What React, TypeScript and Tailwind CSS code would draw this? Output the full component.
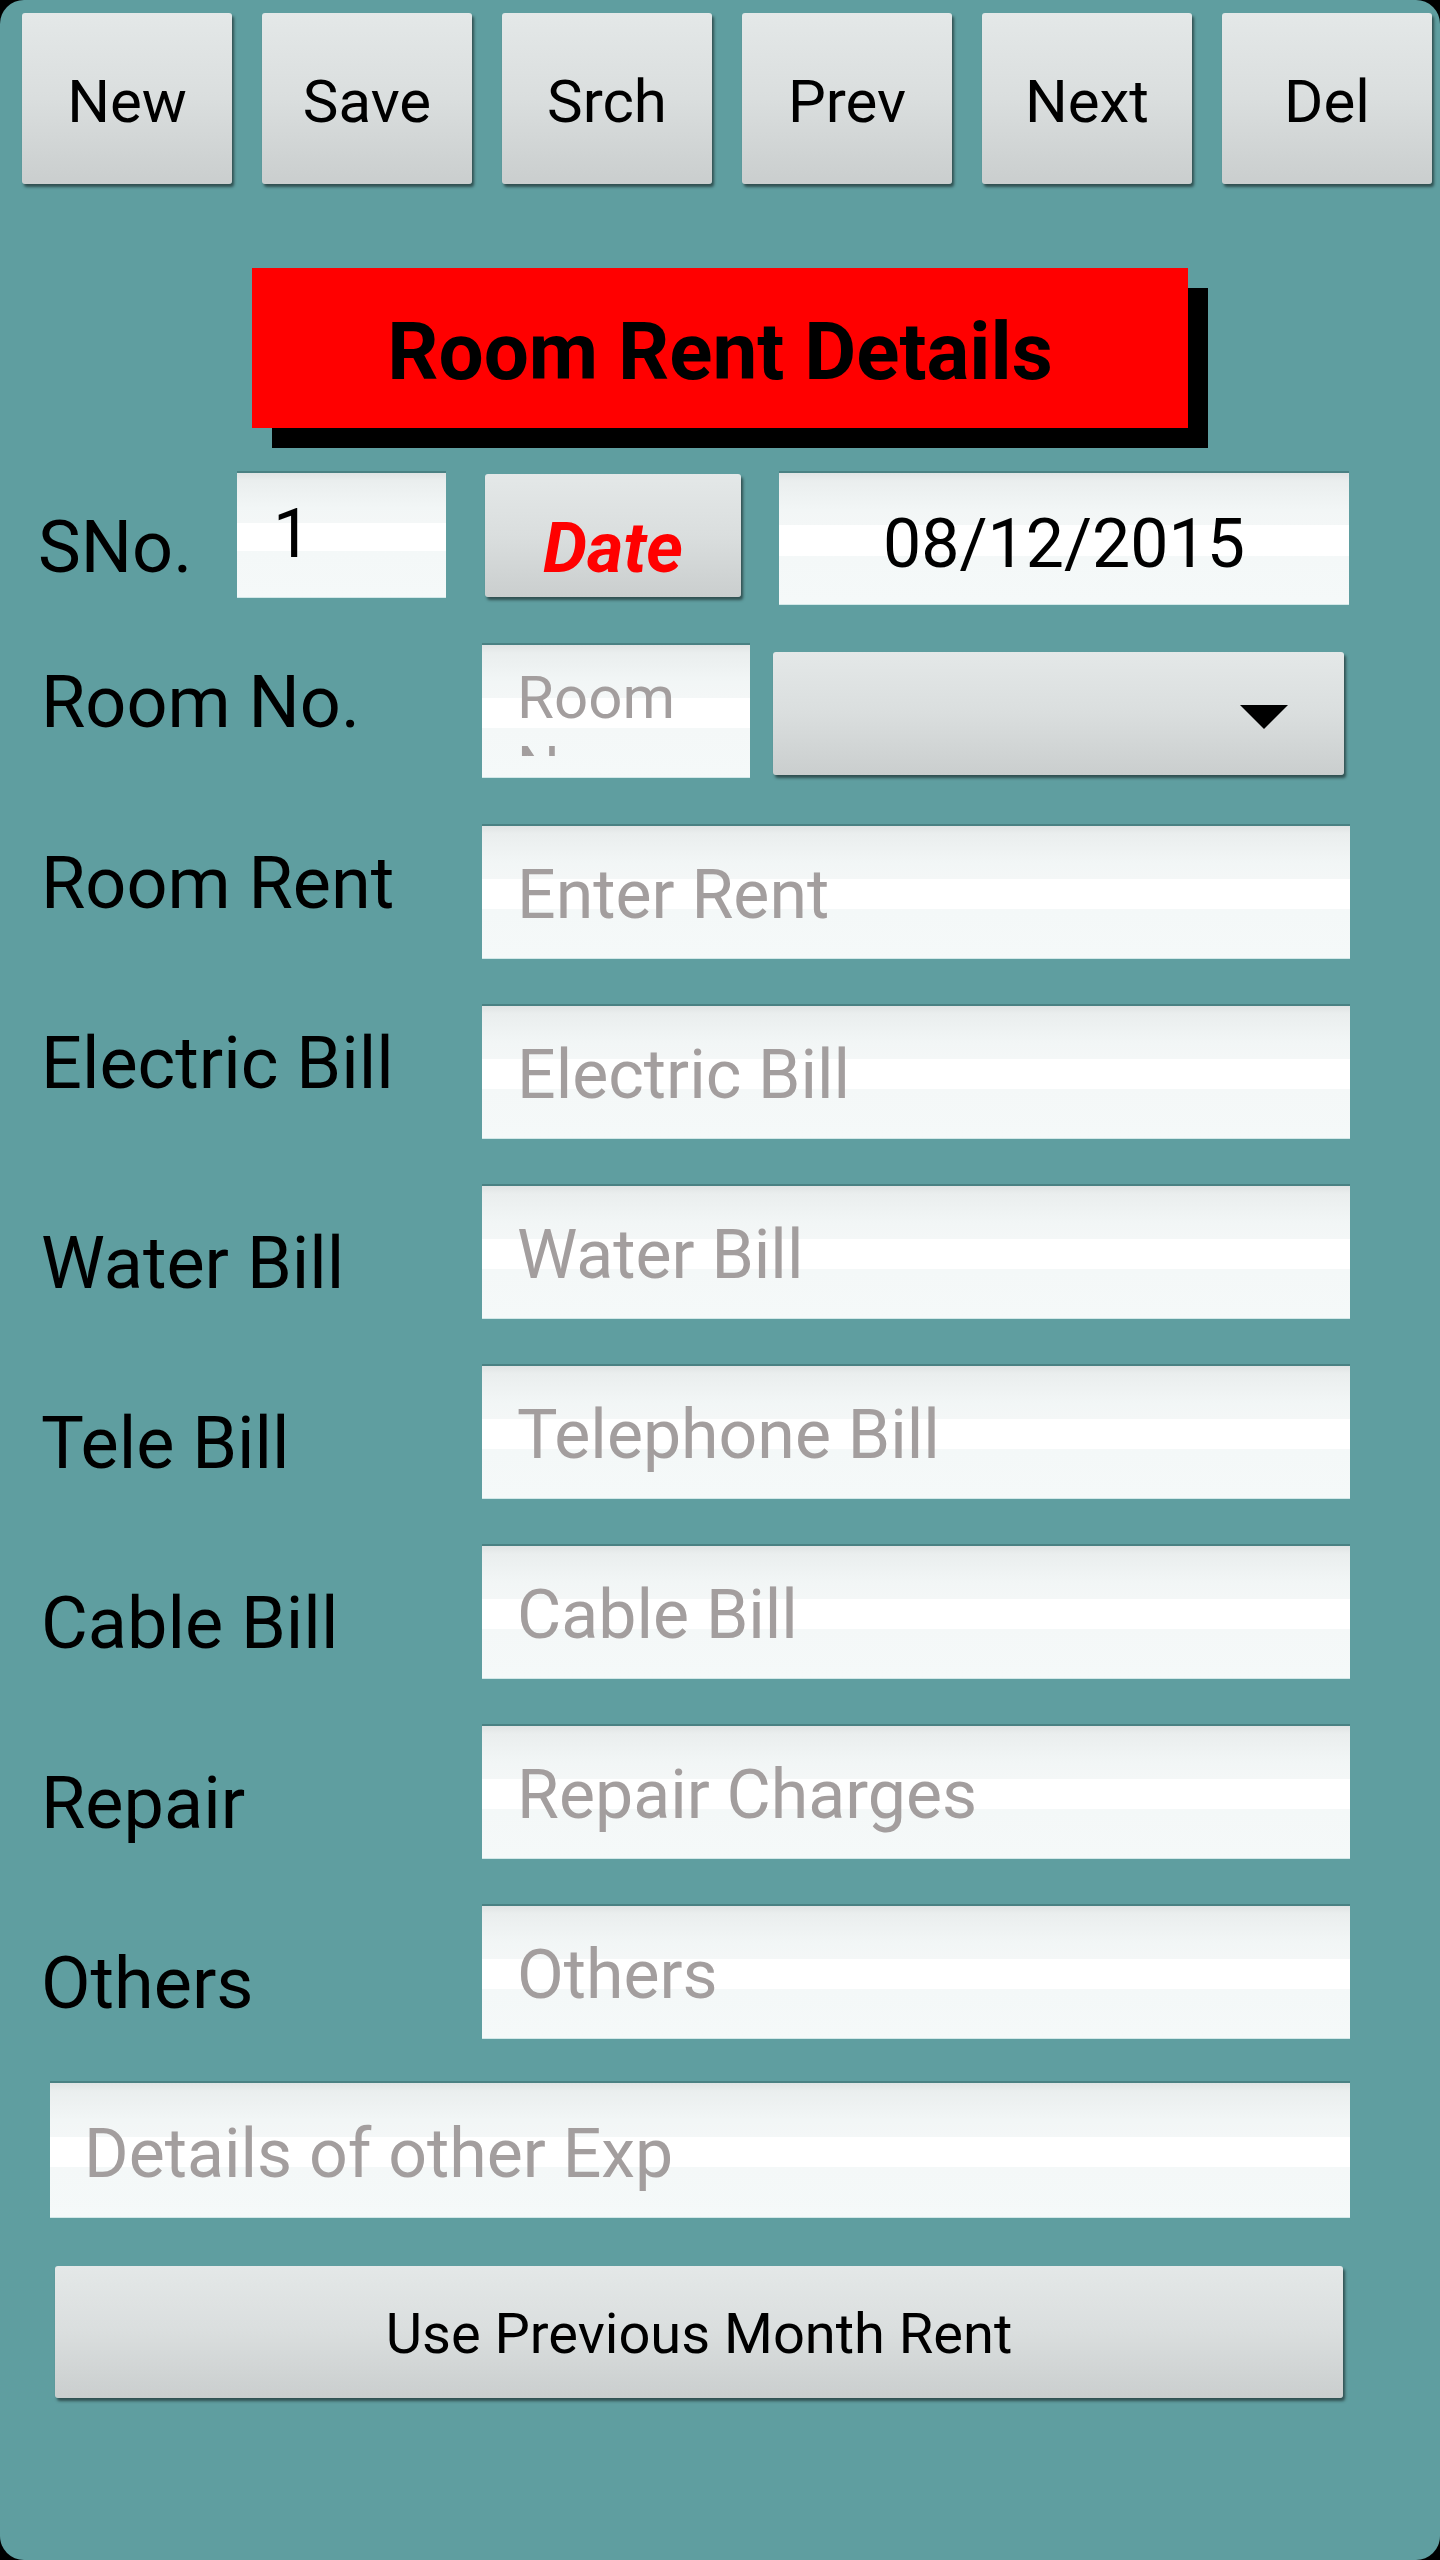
import React from "react";

const BTN =
  "rounded-[3px] bg-[linear-gradient(to_bottom,#e4e8e8_0%,#dadede_50%,#cacece_100%)] shadow-[2px_3px_3px_rgba(0,0,0,0.5)] text-black";

const FIELD =
  "bg-[linear-gradient(to_bottom,#e0e4e4_0%,#eaeeee_6%,#f2f6f6_28%,#f4f7f7_40%,#ffffff_40%,#ffffff_63%,#f4f8f8_63%,#f5f9f9_100%)] shadow-[0_-2px_0_#4a8183,0_1px_0_#d2e8e8]";

const PH = "text-[#a39e9e] text-[68px] leading-[80px] whitespace-nowrap";

type Row = { label: string; ph: string; low: boolean };

const rows: Row[] = [
  { label: "Room Rent", ph: "Enter Rent", low: false },
  { label: "Electric Bill", ph: "Electric Bill", low: false },
  { label: "Water Bill", ph: "Water Bill", low: true },
  { label: "Tele Bill", ph: "Telephone Bill", low: true },
  { label: "Cable Bill", ph: "Cable Bill", low: true },
  { label: "Repair", ph: "Repair Charges", low: true },
  { label: "Others", ph: "Others", low: true },
];

export default function App() {
  return (
    <div className="w-[1440px] h-[2560px] bg-black [font-family:Roboto,sans-serif]">
      <div className="h-full rounded-[24px] bg-[#5f9ea0] flex flex-col">
        {/* Top toolbar */}
        <div className="flex gap-[30px] pl-[22px] pt-[13px]">
          {["New", "Save", "Srch", "Prev", "Next", "Del"].map((t) => (
            <button
              key={t}
              className={
                BTN +
                " w-[210px] h-[171px] text-[60px] leading-none pt-[6px] flex items-center justify-center"
              }
            >
              {t}
            </button>
          ))}
        </div>

        {/* Title */}
        <div className="mt-[84px] ml-[252px] w-[936px] h-[160px] bg-[#ff0000] shadow-[20px_20px_0_#000] flex items-center justify-center pt-[8px] text-[80px] font-bold leading-none text-black">
          Room Rent Details
        </div>

        {/* SNo row */}
        <div className="mt-[45px] flex items-start pl-[38px] h-[131px]">
          <div className="w-[199px] mt-[35px] text-[72px] leading-[80px] text-black">
            SNo.
          </div>
          <div className={FIELD + " w-[209px] h-[124px] pt-[21px] pl-[36px] text-[68px] leading-[80px] text-black"}>
            1
          </div>
          <button
            className={
              BTN +
              " ml-[39px] mt-[1px] w-[256px] h-[123px] pt-[34px] flex justify-center items-start"
            }
          >
            <span className="text-[70px] leading-[80px] font-bold italic text-[#ff0000]">
              Date
            </span>
          </button>
          <div className={FIELD + " ml-[38px] w-[570px] h-[131px] pt-[31px] text-center text-[68px] leading-[80px] text-black"}>
            08/12/2015
          </div>
        </div>

        {/* Room No row */}
        <div className="mt-[41px] flex items-start pl-[41px]">
          <div className="w-[441px] mt-[18px] text-[72px] leading-[80px] text-black whitespace-nowrap">
            Room No.
          </div>
          <div className={FIELD + " w-[268px] h-[132px] pt-[18px] pb-[21px] pl-[35px] pr-[20px]"}>
            <div className="h-full overflow-hidden text-[60px] leading-[70px] text-[#a39e9e]">
              Room No.
            </div>
          </div>
          <div
            className={
              BTN +
              " ml-[23px] mt-[7px] w-[571px] h-[123px] flex items-center justify-end pr-[56px] pt-[7px]"
            }
          >
            <svg width="48" height="24" viewBox="0 0 48 24">
              <polygon points="0,0 48,0 24,24" fill="#000" />
            </svg>
          </div>
        </div>

        {/* Field rows */}
        <div className="mt-[49px] flex flex-col gap-[48px]">
          {rows.map((r) => (
            <div key={r.label} className="flex items-start pl-[41px]">
              <div
                className={
                  "w-[441px] text-[72px] leading-[80px] text-black whitespace-nowrap " +
                  (r.low ? "mt-[38px]" : "mt-[18px]")
                }
              >
                {r.label}
              </div>
              <div className={FIELD + " w-[868px] h-[132px] pt-[29px] pl-[35px]"}>
                <div className={PH}>{r.ph}</div>
              </div>
            </div>
          ))}
        </div>

        {/* Details of other Exp */}
        <div className={FIELD + " mt-[45px] ml-[50px] w-[1300px] h-[134px] pt-[31px] pl-[34px]"}>
          <div className={PH}>Details of other Exp</div>
        </div>

        {/* Use previous month rent */}
        <button
          className={
            BTN +
            " mt-[49px] ml-[55px] w-[1288px] h-[132px] flex items-center justify-center pt-[4px] text-[56px] leading-none"
          }
        >
          Use Previous Month Rent
        </button>
      </div>
    </div>
  );
}
